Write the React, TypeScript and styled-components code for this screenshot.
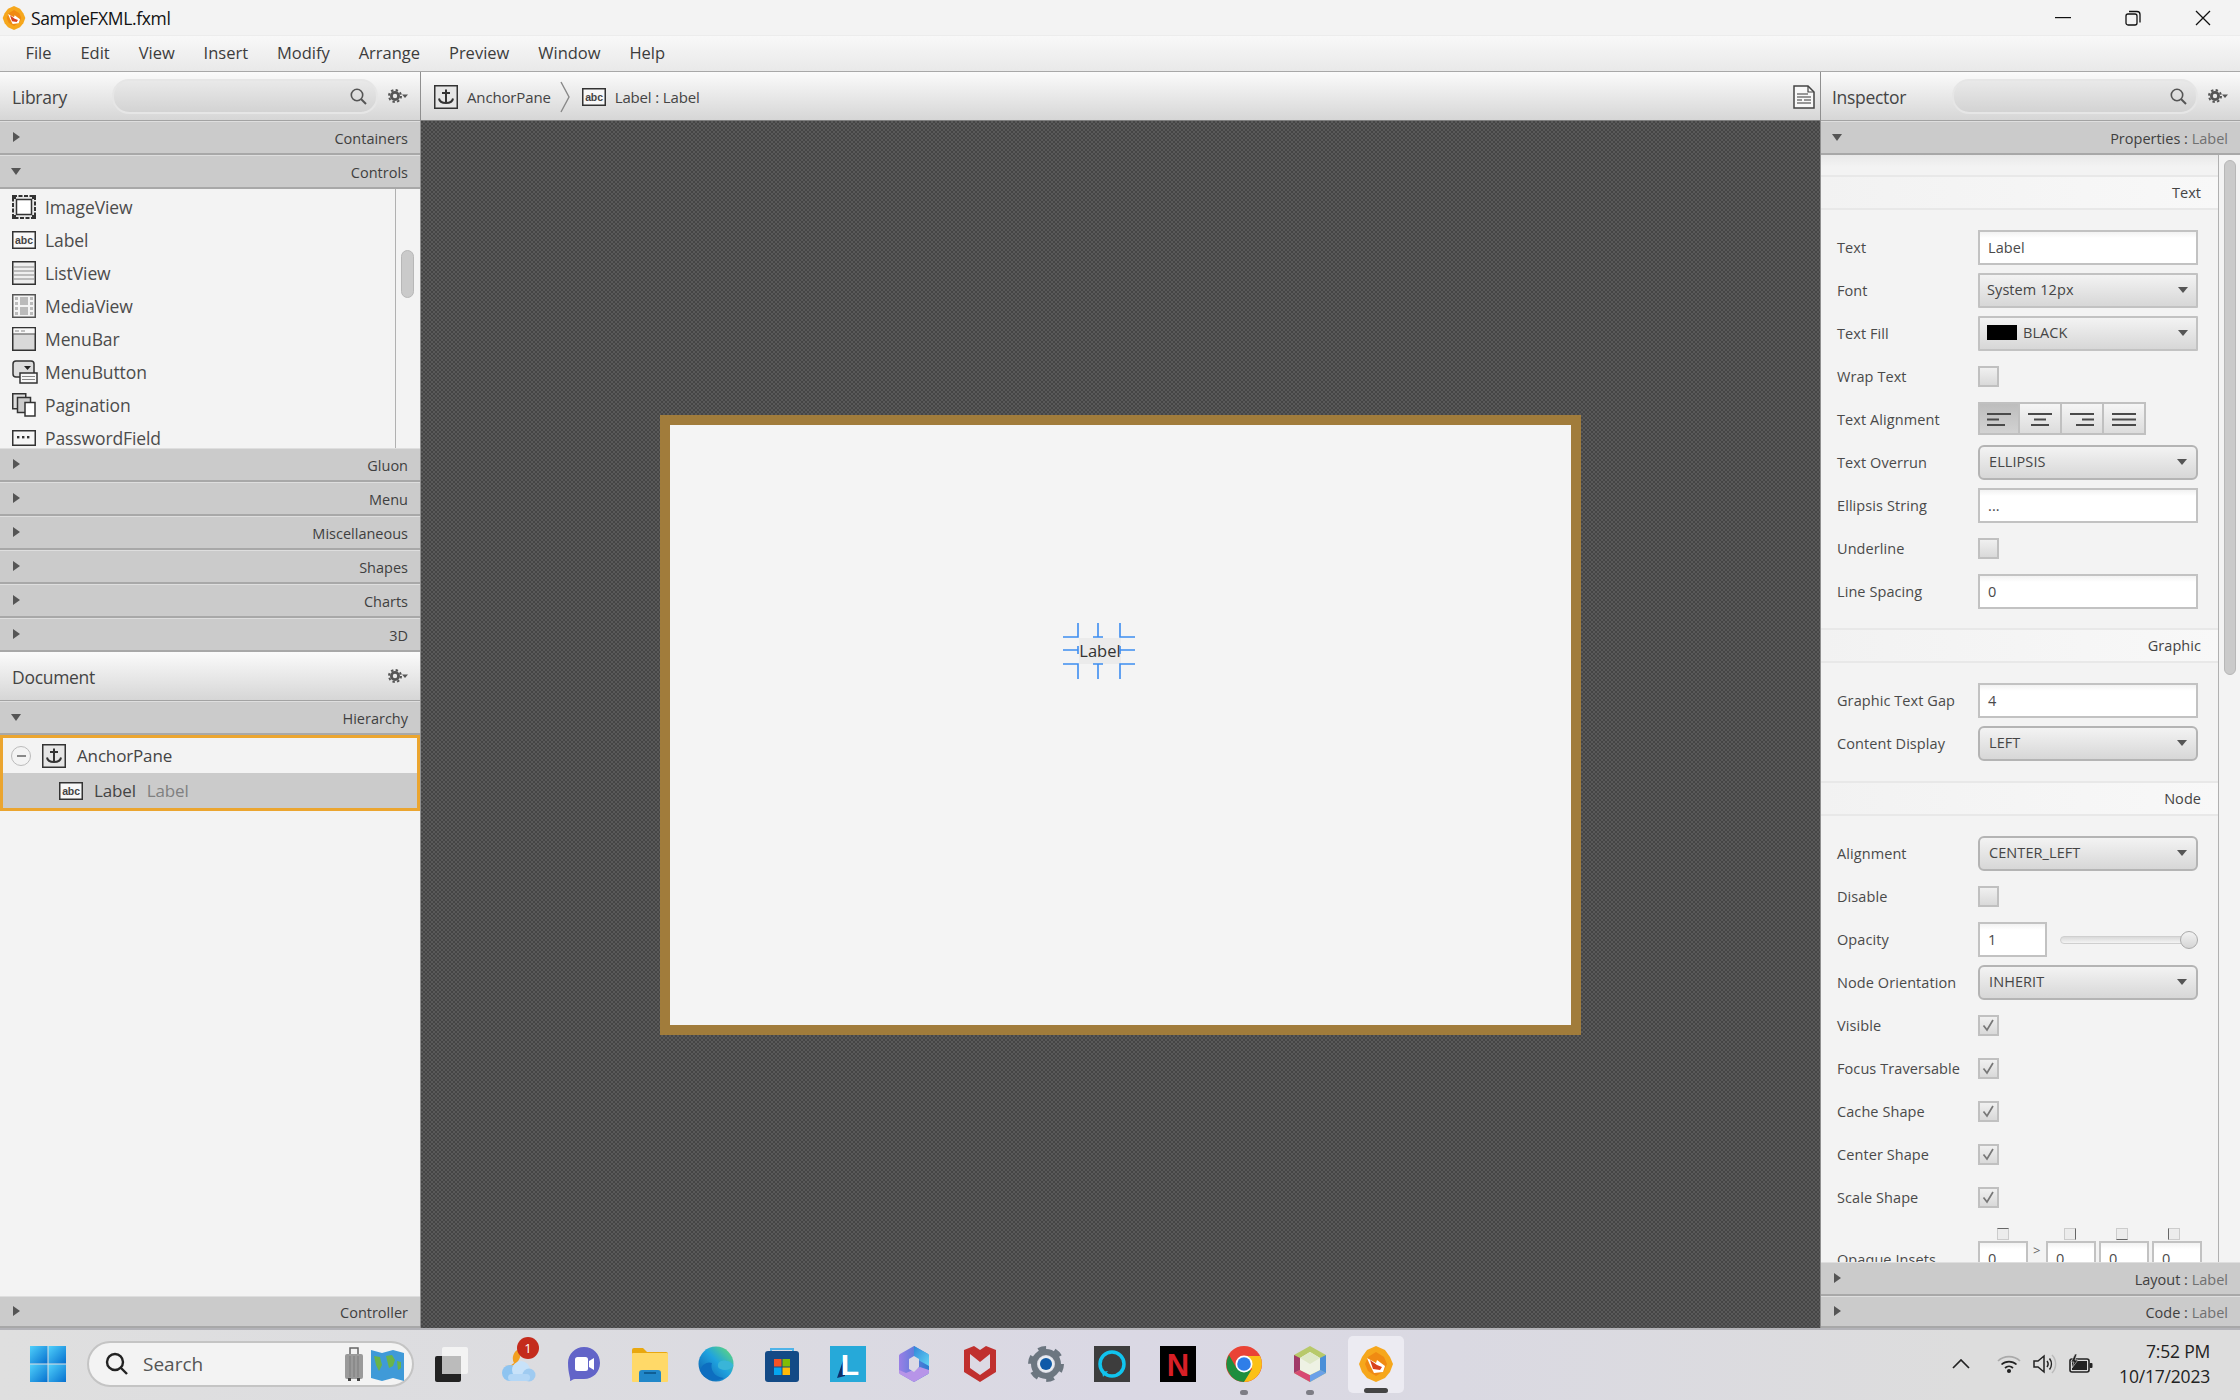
import React from "react";
import styled, { createGlobalStyle } from "styled-components";

const Global = createGlobalStyle`
  html, body { margin: 0; padding: 0; background: #f3f3f3; }
  body { font-family: "Open Sans", "Noto Sans", sans-serif; color: #3c3c3c; }
  * { box-sizing: border-box; }
`;

const Root = styled.div`width: 2240px; height: 1400px; display: flex; flex-direction: column; overflow: hidden;`;
const TitleBar = styled.div`height: 35px; flex: none; display: flex; align-items: center; background: #f3f3f3; padding-left: 2px;`;
const TitleText = styled.span`font-size: 17.5px; color: #111; margin-left: 5px; letter-spacing: -0.35px;`;
const WindowControls = styled.div`margin-left: auto; margin-right: 2px; display: flex; align-items: center;`;
const WindowButton = styled.div`width: 70px; height: 35px; display: flex; align-items: center; justify-content: center;`;
const MenuBar = styled.div`height: 37px; flex: none; display: flex; align-items: center; padding: 0 0 2px 11px; background: linear-gradient(#f8f8f8, #e9e9e9); border-top: 1px solid #ececec; border-bottom: 1px solid #a8a8a8;`;
const MenuItem = styled.span`font-size: 16.5px; padding: 0 14.45px; color: #3c3c3c; letter-spacing: 0;`;
const Main = styled.div`flex: 1; min-height: 0; display: flex;`;
const LeftPanel = styled.div`width: 421px; flex: none; display: flex; flex-direction: column; border-right: 1px solid #8f8f8f; background: #f3f3f3;`;
const CenterPanel = styled.div`flex: 1; min-width: 0; display: flex; flex-direction: column;`;
const RightPanel = styled.div`width: 420px; flex: none; display: flex; flex-direction: column; border-left: 1px solid #8f8f8f; background: #f3f3f3;`;
const PanelHeader = styled.div<{ $h?: number; $left?: number }>`height: ${p => p.$h ?? 49}px; flex: none; display: flex; align-items: center; padding: 2px 12px 0 ${p => p.$left ?? 12}px; background: linear-gradient(#fbfbfb, #d6d6d6); border-bottom: 1px solid #a3a3a3;`;
const PanelTitle = styled.span`font-size: 17.5px; color: #444; letter-spacing: -0.3px;`;
const SearchField = styled.div<{ $w: number }>`width: ${p => p.$w}px; height: 35px; margin-left: auto; margin-bottom: 2px; border-radius: 17px; border: 2px solid #e6e6e6; background: linear-gradient(#e9e9e9, #d3d3d3); display: flex; align-items: center; justify-content: flex-end; padding-right: 9px;`;
const GearWrap = styled.div`margin-left: 10px; margin-bottom: 2px; display: flex; align-items: center;`;
const GearRight = styled(GearWrap)`margin-left: auto;`;
const AccordionRow = styled.div<{ $h?: number }>`height: ${p => p.$h ?? 34}px; flex: none; display: flex; align-items: center; justify-content: space-between; padding: 2px 12px 0 12px; background: #cbcbcb; border-top: 1px solid #dedede; border-bottom: 2px solid #a8a8a8;`;
const Tri = styled.span<{ $open?: boolean }>`width: 0; height: 0; margin-bottom: 3px; ${p => p.$open
  ? `border-left: 5px solid transparent; border-right: 5px solid transparent; border-top: 7px solid #555; margin-left: -1px;`
  : `border-top: 5px solid transparent; border-bottom: 5px solid transparent; border-left: 7px solid #555; margin-left: 1px;`}`;
const RowTitle = styled.span`font-size: 14.5px; color: #3f3f3f; letter-spacing: 0;`;
const Muted = styled.span`color: #707070;`;
const LibraryBody = styled.div`height: 259px; flex: none; display: flex; overflow: hidden;`;
const LibraryList = styled.div`flex: 1; padding-top: 1px; border-right: 1px solid #b0b0b0; overflow: hidden;`;
const LibraryItem = styled.div`height: 33px; flex: none; display: flex; align-items: center; gap: 9px; padding-left: 12px; font-size: 17.5px; color: #4c4c4c; letter-spacing: -0.1px;`;
const Track = styled.div`width: 24px; flex: none; padding: 61px 6px 0 5px;`;
const Thumb = styled.div<{ $h: number }>`height: ${p => p.$h}px; border-radius: 7px; background: #cacaca; border: 1px solid #b7b7b7;`;
const Tree = styled.div`height: 76px; flex: none; border: 3px solid #eba52f; background: #f3f3f3; display: flex; flex-direction: column;`;
const TreeRow = styled.div<{ $sel?: boolean; $indent: number }>`flex: 1; display: flex; align-items: center; gap: 11px; padding-left: ${p => p.$indent}px; font-size: 17px; letter-spacing: -0.15px; color: #444; background: ${p => p.$sel ? "#cbcbcb" : "transparent"};`;
const Expander = styled.span`width: 20px; height: 20px; border-radius: 50%; border: 1.5px solid #bbb; display: flex; align-items: center; justify-content: center; &::before { content: ""; width: 9px; height: 2px; background: #888; }`;
const TreeMuted = styled.span`color: #808080; margin-left: 0;`;
const Spacer = styled.div`flex: 1; background: #f3f3f3;`;
const Toolbar = styled.div`height: 49px; flex: none; display: flex; align-items: center; padding: 2px 5px 0 13px; background: linear-gradient(#fbfbfb, #d6d6d6); border-bottom: 1px solid #7e7e7e; font-size: 15px; letter-spacing: -0.15px; color: #444;`;
const Crumb = styled.span`margin-left: 9px;`;
const CrumbSep = styled.span`margin: 0 12px 0 9px; display: flex;`;
const DocWrap = styled.span`margin-left: auto; display: flex;`;
const Canvas = styled.div`flex: 1; min-height: 0; display: flex; align-items: center; justify-content: center; background-color: #4e4e4e; background-image: repeating-conic-gradient(#595959 0 25%, #454545 0 50%); background-size: 4px 4px;`;
const Stage = styled.div`position: relative; width: 921px; height: 620px; border: 10px solid #a17c3b; background: #f4f4f4;`;
const SelectedLabel = styled.div`position: absolute; left: 409px; top: 213px; width: 42px; height: 26px; background: #ebebeb; font-size: 16.5px; line-height: 26px; text-align: center; color: #333; letter-spacing: 0;`;
const Handles = styled.svg`position: absolute; left: 393px; top: 198px;`;
const InspectorScroll = styled.div`flex: 1; min-height: 0; display: flex; overflow: hidden;`;
const InspectorBody = styled.div`width: 398px; flex: none; border-right: 1.5px solid #b0b0b0; padding-top: 20px; overflow: hidden; background: linear-gradient(#e9e9e9, #f3f3f3 12px);`;
const InspectorTrack = styled.div`flex: 1; padding: 5px 4px 0 5px;`;
const Band = styled.div<{ $mt?: number }>`height: 35px; margin-top: ${p => p.$mt ?? 0}px; display: flex; align-items: center; justify-content: flex-end; padding-right: 17px; font-size: 14.5px; letter-spacing: 0.05px; color: #444; background: linear-gradient(90deg, #f2f2f2, #f8f8f8); border-top: 2px solid #e8e8e8; border-bottom: 2px solid #e8e8e8;`;
const Rows = styled.div`padding: 16px 0 0 16px;`;
const Prop = styled.div`height: 43px; display: grid; grid-template-columns: 141px 220px; align-items: center; font-size: 14.5px; letter-spacing: 0.08px; color: #4a4a4a;`;
const Field = styled.div<{ $w?: number }>`width: ${p => p.$w ? `${p.$w}px` : "100%"}; height: 35px; border: 2px solid #c2c2c2; background: linear-gradient(#f2f2f2, #fff 6px); display: flex; align-items: center; padding-left: 8px; font-size: 14.5px; color: #4a4a4a; flex: none;`;
const Combo = styled.div<{ $round?: boolean }>`height: 35px; border: 2px solid ${p => p.$round ? "#b4b4b4" : "#c2c2c2"}; border-radius: ${p => p.$round ? 6 : 1}px; background: linear-gradient(#f3f3f3, #d7d7d7); display: flex; align-items: center; padding: 0 ${p => p.$round ? 9 : 8}px 2px ${p => p.$round ? 9 : 7}px; font-size: 14.5px; color: #454545;`;
const Caret = styled.span`margin-left: auto; width: 0; height: 0; border-left: 5px solid transparent; border-right: 5px solid transparent; border-top: 6px solid #555;`;
const Swatch = styled.span`width: 30px; height: 15px; background: #000; margin-right: 6px;`;
const Check = styled.div`width: 21px; height: 21px; margin-bottom: 1px; border: 2px solid #c0c0c0; background: linear-gradient(#f0f0f0, #d9d9d9); display: flex; align-items: center; justify-content: center;`;
const AlignGroup = styled.div`display: flex; margin-bottom: 2px;`;
const AlignBtn = styled.div<{ $on?: boolean }>`width: 42px; height: 33px; border: 2px solid #c0c0c0; border-left-width: ${p => p.$on ? 2 : 0}px; background: ${p => p.$on ? "linear-gradient(#bdbdbd, #d2d2d2)" : "linear-gradient(#f5f5f5, #dcdcdc)"}; display: flex; align-items: center; justify-content: center;`;
const OpacityBox = styled.div`display: flex; align-items: center;`;
const SliderTrack = styled.div`position: relative; width: 130px; height: 8px; margin-left: 13px; border-radius: 4px; border: 1px solid #cfcfcf; background: linear-gradient(#d9d9d9, #f4f4f4);`;
const SliderThumb = styled.div`position: absolute; right: -9px; top: -6px; width: 18px; height: 18px; border-radius: 50%; border: 1.5px solid #aaa; background: linear-gradient(#f2f2f2, #d5d5d5);`;
const InsetIcons = styled.div`display: grid; grid-template-columns: 67px 52px 52px 52px; margin: 9px 0 0 141px; padding-left: 19px;`;
const InsetIcon = styled.div<{ $side: string }>`width: 12px; height: 12px; border: 1px solid #ccc; background: #ececec; border-${p => p.$side}: 1.5px solid #666;`;
const InsetRow = styled.div`display: flex; align-items: flex-start; height: 30px; margin-top: 1px; font-size: 14.5px; letter-spacing: 0.08px; color: #4a4a4a;`;
const InsetLabel = styled.span`width: 141px; padding-top: 9px;`;
const InsetField = styled(Field)`height: 30px; margin-right: 3px; width: 50px; align-items: flex-start; padding-top: 6px;`;
const InsetSep = styled.span`width: 15px; color: #666; font-size: 13px; padding-left: 2px;`;

const Taskbar = styled.div`height: 72px; flex: none; padding-bottom: 2px; border-top: 2px solid #b3b3b8; display: flex; align-items: center; background: linear-gradient(90deg, #dfdfdf, #dcdce0 25%, #dad8e4 50%, #dad9e2 65%, #dddddd 88%);`;
const StartCell = styled.div`width: 66px; padding-left: 30px; flex: none; display: flex;`;
const SearchPill = styled.div`width: 327px; height: 46px; margin-left: 21px; margin-right: 5px; flex: none; border-radius: 23px; border: 2px solid #c4c4c4; background: #f3f3f3; display: flex; align-items: center; padding: 0 8px 0 16px; font-size: 19px; color: #555; gap: 14px;`;
const PillIcons = styled.div`margin-left: auto; display: flex; align-items: center; gap: 8px;`;
const Cell = styled.div<{ $active?: boolean }>`position: relative; width: ${p => p.$active ? 56 : 66}px; margin: ${p => p.$active ? "0 5px" : "0"}; height: 57px; flex: none; display: flex; align-items: center; justify-content: center; border-radius: 5px; background: ${p => p.$active ? "#ecebf2" : "transparent"};`;
const Badge = styled.span`position: absolute; left: 32px; top: 1px; width: 22px; height: 22px; border-radius: 50%; background: #c42b1c; color: #fff; font-size: 13px; display: flex; align-items: center; justify-content: center;`;
const Dot = styled.span`position: absolute; bottom: -2px; left: 29px; width: 8px; height: 5px; border-radius: 3px; background: #7d7d85;`;
const ActiveBar = styled.span`position: absolute; bottom: 0; left: 16px; width: 24px; height: 5px; border-radius: 3px; background: #444;`;
const Tray = styled.div`margin-left: auto; display: flex; align-items: center; padding-right: 30px;`;
const TrayIcons = styled.div`display: flex; align-items: center; gap: 12px; margin-right: 26px;`;
const TrayGap = styled.span`width: 27px;`;
const Clock = styled.div`text-align: right; font-size: 17.5px; line-height: 25px; color: #222; letter-spacing: -0.2px;`;

const AbcIcon = () => (
  <svg width="24" height="24" viewBox="0 0 24 24"><rect x="0.75" y="3.75" width="22.5" height="16.5" fill="#f8f8f8" stroke="#333" strokeWidth="1.5" /><text x="12" y="16" textAnchor="middle" fontSize="10.5" fontWeight="700" fontFamily="Liberation Sans, sans-serif" fill="#444">abc</text></svg>
);
const AnchorIcon = () => (
  <svg width="24" height="24" viewBox="0 0 24 24"><rect x="0.75" y="0.75" width="22.5" height="22.5" fill="#e6e6e6" stroke="#333" strokeWidth="1.5" /><g stroke="#333" strokeWidth="2" fill="none"><path d="M12 4.5V18M8 8h8" /><path d="M5 13.5c.5 3.2 3 4.5 7 4.5s6.5-1.3 7-4.5" /></g></svg>
);
const ImageIcon = () => (
  <svg width="24" height="24" viewBox="0 0 24 24"><rect x="1" y="1" width="22" height="22" fill="#e8e8e8" stroke="#333" strokeWidth="2" strokeDasharray="4 1.5" /><rect x="0" y="0" width="4" height="4" fill="#333" /><rect x="20" y="0" width="4" height="4" fill="#333" /><rect x="0" y="20" width="4" height="4" fill="#333" /><rect x="20" y="20" width="4" height="4" fill="#333" /><rect x="4.5" y="4.5" width="15" height="15" fill="#fff" stroke="#333" strokeWidth="1.5" /></svg>
);
const ListIcon = () => (
  <svg width="24" height="24" viewBox="0 0 24 24"><rect x="0.75" y="0.75" width="22.5" height="22.5" fill="#eee" stroke="#333" strokeWidth="1.5" /><path d="M2 6h20M2 10h20M2 14h20M2 18h20" stroke="#aaa" strokeWidth="1.5" /></svg>
);
const MediaIcon = () => (
  <svg width="24" height="24" viewBox="0 0 24 24"><rect x="0.75" y="0.75" width="22.5" height="22.5" fill="#f4f4f4" stroke="#555" strokeWidth="1.5" /><g fill="#bbb"><rect x="3" y="3" width="3" height="3" /><rect x="3" y="8" width="3" height="3" /><rect x="3" y="13" width="3" height="3" /><rect x="3" y="18" width="3" height="3" /><rect x="18" y="3" width="3" height="3" /><rect x="18" y="8" width="3" height="3" /><rect x="18" y="13" width="3" height="3" /><rect x="18" y="18" width="3" height="3" /><rect x="8" y="3" width="8" height="8" /><rect x="8" y="13" width="8" height="8" /></g></svg>
);
const MenuBarIcon = () => (
  <svg width="24" height="24" viewBox="0 0 24 24"><rect x="0.75" y="0.75" width="22.5" height="22.5" fill="#d9d9d9" stroke="#333" strokeWidth="1.5" /><rect x="1.5" y="1.5" width="21" height="5" fill="#f8f8f8" /><path d="M1 7h22" stroke="#555" /><path d="M3 4h4M9 4h4" stroke="#888" /></svg>
);
const MenuButtonIcon = () => (
  <svg width="24" height="24" viewBox="0 0 24 24" overflow="visible"><rect x="1" y="1" width="21" height="16" rx="3" fill="#ddd" stroke="#333" strokeWidth="1.5" /><path d="M12 6h7l-3.5 4z" fill="#222" /><rect x="8" y="13" width="17" height="10" fill="#f8f8f8" stroke="#333" strokeWidth="1.5" /><path d="M10 16.5h13M10 19.5h13" stroke="#888" /></svg>
);
const PaginationIcon = () => (
  <svg width="24" height="24" viewBox="0 0 24 24"><rect x="0.75" y="0.75" width="13" height="15" fill="#ddd" stroke="#333" strokeWidth="1.5" /><rect x="5.5" y="4.5" width="13" height="15" fill="#ccc" stroke="#333" strokeWidth="1.5" /><rect x="13" y="9.5" width="10" height="13.5" fill="#fff" stroke="#333" strokeWidth="1.5" /></svg>
);
const PasswordIcon = () => (
  <svg width="24" height="24" viewBox="0 0 24 24"><rect x="0.75" y="4.75" width="22.5" height="14.5" fill="#f6f6f6" stroke="#333" strokeWidth="1.5" /><g fill="#333"><rect x="5" y="10" width="2.4" height="2.4" /><rect x="10" y="10" width="2.4" height="2.4" /><rect x="15" y="10" width="2.4" height="2.4" /></g></svg>
);
const DocIcon = () => (
  <svg width="22" height="24" viewBox="0 0 22 24"><path d="M1 1h14l6 6v16H1z" fill="#f8f8f8" stroke="#444" strokeWidth="1.5" /><path d="M15 1v6h6" fill="none" stroke="#444" strokeWidth="1.2" /><path d="M4 9h11M4 12h14M4 15h5M11 15h7M4 18h14" stroke="#777" strokeWidth="1.3" /></svg>
);
const SearchIcon = () => (
  <svg width="17" height="17" viewBox="0 0 17 17" fill="none" stroke="#555" strokeWidth="1.6"><circle cx="7" cy="7" r="5.7" /><path d="M11 11l5 5" strokeWidth="2" /></svg>
);
const GearIcon = () => (
  <svg width="20" height="14" viewBox="0 0 20 14"><circle cx="7" cy="7" r="3.6" fill="none" stroke="#555" strokeWidth="2.8" /><circle cx="7" cy="7" r="6" fill="none" stroke="#555" strokeWidth="2" strokeDasharray="2.4 2.3" /><path d="M14 5.5h6l-3 3.5z" fill="#555" /></svg>
);
const CrumbChevron = () => (
  <svg width="10" height="32" viewBox="0 0 10 32" fill="none" stroke="#888" strokeWidth="1.4"><path d="M1 1l8 15-8 15" /></svg>
);
const CheckMark = () => (
  <svg width="13" height="13" viewBox="0 0 13 13" fill="none" stroke="#777" strokeWidth="1.7"><path d="M1.5 6.5l3.5 4.5 6-10" /></svg>
);
const AlignLines = ({ w }: { w: number[][] }) => (
  <svg width="24" height="14" viewBox="0 0 24 14">{w.map(([a, b], i) => <rect key={i} x={a} y={i * 5.5 + 1} width={b - a} height="2" fill="#4a4a4a" />)}</svg>
);

const WinLogo = () => (
  <svg width="36" height="36" viewBox="0 0 36 36">
    <defs><linearGradient id="win" x1="0" y1="0" x2="1" y2="1"><stop offset="0" stopColor="#4fd0fb" /><stop offset="1" stopColor="#0670cf" /></linearGradient></defs>
    <g fill="url(#win)"><rect x="0" y="0" width="17.5" height="17.5" /><rect x="18.5" y="0" width="17.5" height="17.5" /><rect x="0" y="18.5" width="17.5" height="17.5" /><rect x="18.5" y="18.5" width="17.5" height="17.5" /></g>
  </svg>
);
const TaskView = () => (
  <svg width="36" height="36" viewBox="0 0 36 36"><rect x="1" y="10" width="26" height="26" rx="2" fill="#222" /><rect x="8" y="1" width="26" height="27" rx="2" fill="#f5f5f5" fillOpacity=".9" /><rect x="8" y="10" width="19" height="18" fill="#bbb" /></svg>
);
const Weather = () => (
  <svg width="36" height="36" viewBox="0 0 36 36"><path d="M17 1a10 10 0 00-5 14 10 10 0 01-11 2 12 12 0 0016-16z" fill="#f29f1f" transform="translate(2 2)" /><circle cx="10" cy="27" r="8" fill="#8ec4f0" /><circle cx="21" cy="24" r="9" fill="#c8e2f9" /><circle cx="29" cy="29" r="6.5" fill="#9fcbf1" /><rect x="8" y="28" width="22" height="7" rx="3.5" fill="#b4d7f6" /></svg>
);
const Teams = () => (
  <svg width="36" height="36" viewBox="0 0 36 36"><path d="M18 1c9.5 0 16 7 16 16s-7 16-16 16H9c-2 0-4 2-5 2 1-3-2-7-2-18C2 8 9 1 18 1z" fill="#6264c8" /><rect x="9" y="11" width="13" height="14" rx="2.5" fill="#fff" /><path d="M23 15l5-3v12l-5-3z" fill="#fff" /></svg>
);
const Folder = () => (
  <svg width="36" height="36" viewBox="0 0 36 36"><path d="M0 4a2 2 0 012-2h9l4 4h19a2 2 0 012 2v26H0z" fill="#e9a80f" /><rect x="0" y="7" width="36" height="29" rx="1" fill="#ffd968" /><path d="M7 36v-9a3 3 0 013-3h16a3 3 0 013 3v9z" fill="#2187c9" /><rect x="12" y="26" width="12" height="2" fill="#0f5e94" /></svg>
);
const Edge = () => (
  <svg width="36" height="36" viewBox="0 0 36 36">
    <defs><linearGradient id="edge" x1="0" y1="1" x2="1" y2="0"><stop offset="0" stopColor="#0b57a8" /><stop offset=".55" stopColor="#1fa3df" /><stop offset="1" stopColor="#6be06a" /></linearGradient></defs>
    <circle cx="18" cy="18" r="17.5" fill="url(#edge)" /><path d="M35.5 20c-3 4-9 5-13 3-3-1-3-4-2-6 1-2 5-3 8-2 3 0 6 2 7 5z" fill="#39b5d8" /><path d="M14 17c-2 5 1 14 12 15-7 4-19 3-24-8 2-6 8-9 12-7z" fill="#0d6ec0" />
  </svg>
);
const Store = () => (
  <svg width="36" height="36" viewBox="0 0 36 36"><path d="M7 8V3h22v5" fill="none" stroke="#4fb3e8" strokeWidth="2" /><rect x="1" y="5" width="34" height="31" rx="3" fill="#134a86" /><rect x="10" y="13" width="7.5" height="7.5" fill="#f35325" /><rect x="18.5" y="13" width="7.5" height="7.5" fill="#81bc06" /><rect x="10" y="21.5" width="7.5" height="7.5" fill="#05a6f0" /><rect x="18.5" y="21.5" width="7.5" height="7.5" fill="#ffba08" /></svg>
);
const LLogo = () => (
  <svg width="36" height="36" viewBox="0 0 36 36"><rect width="36" height="36" fill="#26a9d9" /><path d="M7 32L15 9v21z" fill="#0d2f6b" /><text x="20" y="29" textAnchor="middle" fontSize="30" fontWeight="700" fontFamily="Liberation Sans, sans-serif" fill="#fff">L</text></svg>
);
const M365 = () => (
  <svg width="32" height="36" viewBox="0 0 32 36">
    <defs>
      <linearGradient id="m3a" x1="0" y1="0" x2="1" y2="0"><stop offset="0" stopColor="#9a7fe6" /><stop offset="1" stopColor="#2b7ad0" /></linearGradient>
      <linearGradient id="m3b" x1="0" y1="0" x2="1" y2="1"><stop offset="0" stopColor="#2f86d8" /><stop offset="1" stopColor="#63d4f4" /></linearGradient>
    </defs>
    <path d="M16 0l14 8a3 3 0 011 3v14a3 3 0 01-1 3l-14 8-14-8a3 3 0 01-1-3V11a3 3 0 011-3z" fill="url(#m3a)" />
    <path d="M16 0l14 8a3 3 0 011 3v9l-9-5-6-4z" fill="url(#m3b)" />
    <path d="M1 24l7 3 14-6 9 3v1a3 3 0 01-1 3l-14 8-14-8a3 3 0 01-1-3z" fill="#b794e8" />
    <path d="M11 13l5-3 5 3v8l-5 5-5-3z" fill="#dbd9e4" />
  </svg>
);
const McAfee = () => (
  <svg width="32" height="36" viewBox="0 0 32 36"><path d="M0 4l10-4 6 4 6-4 10 4v22L16 36 0 26z" fill="#c0302e" /><path d="M6 8l10 8 10-8v14l-10 7-10-7z" fill="#dcdae3" /></svg>
);
const SysGear = () => (
  <svg width="36" height="36" viewBox="0 0 36 36"><circle cx="18" cy="18" r="12" fill="none" stroke="#6c7680" strokeWidth="6" /><circle cx="18" cy="18" r="16" fill="none" stroke="#6c7680" strokeWidth="4" strokeDasharray="8 8.75" /><circle cx="18" cy="18" r="8" fill="#e9edf1" /><circle cx="18" cy="18" r="6" fill="#0f5aa8" /></svg>
);
const Alexa = () => (
  <svg width="36" height="36" viewBox="0 0 36 36"><rect width="36" height="36" fill="#3d3d3d" /><circle cx="18" cy="18" r="12" fill="none" stroke="#11c4ee" strokeWidth="3.5" /><path d="M9 31l5-6-6 1z" fill="#11c4ee" /></svg>
);
const Netflix = () => (
  <svg width="36" height="36" viewBox="0 0 36 36"><rect width="36" height="36" fill="#000" /><text x="18" y="30" textAnchor="middle" fontSize="31" fontWeight="700" fontFamily="Liberation Sans Narrow, Liberation Sans, sans-serif" fill="#d81f26">N</text></svg>
);
const Chrome = () => (
  <svg width="36" height="36" viewBox="0 0 36 36"><circle cx="18" cy="18" r="18" fill="#ea4335" /><path d="M18 18L3 27A18 18 0 0018 36l8-10z" fill="#1e8e3e" /><path d="M18 10h16a18 18 0 01-16 26l8-13z" fill="#fbc116" /><path d="M3 9a18 18 0 000 18l8-4z" fill="#1e8e3e" /><circle cx="18" cy="18" r="8.5" fill="#fff" /><circle cx="18" cy="18" r="6.8" fill="#2f7ee8" /></svg>
);
const Gem = () => (
  <svg width="32" height="36" viewBox="0 0 32 36"><path d="M16 0l16 9v18l-16 9-16-9V9z" fill="#b8c96a" /><path d="M0 9l6 3v12l-6 3z" fill="#a03a68" /><path d="M32 9l-6 3v12l6 3z" fill="#4a8fd8" /><path d="M0 27l6-3 10 5v7z" fill="#d84a72" /><path d="M32 27l-6-3-10 5v7z" fill="#6aa0e8" /><path d="M16 6l10 6v12l-10 5-10-5V12z" fill="#eef2e4" /><path d="M6 12l10-6 10 6-10 6z" fill="#dfe8c8" /></svg>
);
const Scene = ({ small }: { small?: boolean }) => {
  const s = small ? 24 : 36;
  return (
    <svg width={s} height={s} viewBox="0 0 36 36"><path d="M18 0l9 4 5 7 3 7-3 8-5 6-9 4-9-4-5-6-3-8 3-7 5-7z" fill="#f6a71c" /><path d="M18 6l8 5 3 7-3 7-8 5-8-5-3-7 3-7z" fill="#f08a12" /><path d="M9 12l9 5 1-3 8 6-2 6-9 1-4-8z" fill="#fff" /><path d="M12 14l7 5 5 2-2 3-7-1z" fill="#d8401e" /></svg>
  );
};
const Suitcase = () => (
  <svg width="18" height="34" viewBox="0 0 18 34"><path d="M5 7V1h8v6" fill="none" stroke="#666" strokeWidth="1.5" /><rect x="0" y="7" width="18" height="25" rx="2" fill="#9a9a9a" /><path d="M5 9v21M9 9v21M13 9v21" stroke="#7c7c7c" /><rect x="3" y="31" width="3" height="3" fill="#444" /><rect x="12" y="31" width="3" height="3" fill="#444" /></svg>
);
const MapIcon = () => (
  <svg width="33" height="34" viewBox="0 0 33 34"><path d="M0 3l11 3 11-3 11 3v28l-11-3-11 3-11-3z" fill="#3f9ad8" /><path d="M3 9l6 1 2 8-3 6-3-6zM15 9l6-1 3 5-2 6-4 2zM26 14l4 1v6l-3 2z" fill="#69b44a" /></svg>
);
const Wifi = () => (
  <svg width="24" height="20" viewBox="0 0 24 20" fill="none" stroke="#222" strokeWidth="1.7"><path d="M1 7a16 16 0 0122 0" stroke="#aaa" /><path d="M4.5 10.5a11 11 0 0115 0" /><path d="M8 14a6 6 0 018 0" /><circle cx="12" cy="17" r="1.2" fill="#222" /></svg>
);
const Volume = () => (
  <svg width="24" height="24" viewBox="0 0 24 24" fill="none" stroke="#222" strokeWidth="1.5"><path d="M1 9h4l6-5v16l-6-5H1z" /><path d="M14 9a5 5 0 010 6M16.5 6.5a9 9 0 010 11" /><path d="M19 3a13 13 0 010 18" stroke="#bbb" /></svg>
);
const Battery = () => (
  <svg width="24" height="20" viewBox="0 0 24 20"><rect x="1" y="5" width="19" height="13" rx="2" fill="none" stroke="#222" strokeWidth="1.6" /><rect x="3" y="7" width="15" height="9" fill="#222" /><rect x="20.5" y="9" width="3" height="5" rx="1" fill="#222" /><path d="M6 0L2 8h3l-2 6 6-8H6l2-6z" fill="#222" stroke="#ddd" strokeWidth=".6" /></svg>
);

const libraryItems: [React.FC, string][] = [
  [ImageIcon, "ImageView"], [AbcIcon, "Label"], [ListIcon, "ListView"], [MediaIcon, "MediaView"],
  [MenuBarIcon, "MenuBar"], [MenuButtonIcon, "MenuButton"], [PaginationIcon, "Pagination"], [PasswordIcon, "PasswordField"],
];
const menus = ["File", "Edit", "View", "Insert", "Modify", "Arrange", "Preview", "Window", "Help"];

const Section = ({ title, h }: { title: string; h?: number }) => (
  <AccordionRow $h={h}><Tri /><RowTitle>{title}</RowTitle></AccordionRow>
);
const PropText = ({ label, value }: { label: string; value: string }) => (
  <Prop><span>{label}</span><Field>{value}</Field></Prop>
);
const PropCombo = ({ label, value }: { label: string; value: string }) => (
  <Prop><span>{label}</span><Combo $round>{value}<Caret /></Combo></Prop>
);
const PropCheck = ({ label, on }: { label: string; on?: boolean }) => (
  <Prop><span>{label}</span><Check>{on && <CheckMark />}</Check></Prop>
);

export default function App() {
  return (
    <Root>
      <Global />
      <TitleBar>
        <Scene small />
        <TitleText>SampleFXML.fxml</TitleText>
        <WindowControls>
          <WindowButton><svg width="16" height="2"><rect width="16" height="1.2" fill="#111" /></svg></WindowButton>
          <WindowButton><svg width="16" height="16" viewBox="0 0 16 16" fill="none" stroke="#111" strokeWidth="1.3"><rect x="1" y="4" width="11" height="11" rx="2" /><path d="M4 1.5h8a3 3 0 013 3v8" /></svg></WindowButton>
          <WindowButton><svg width="16" height="16" viewBox="0 0 16 16" stroke="#111" strokeWidth="1.3"><path d="M1 1l14 14M15 1L1 15" /></svg></WindowButton>
        </WindowControls>
      </TitleBar>
      <MenuBar>{menus.map(m => <MenuItem key={m}>{m}</MenuItem>)}</MenuBar>
      <Main>
        <LeftPanel>
          <PanelHeader>
            <PanelTitle>Library</PanelTitle>
            <SearchField $w={266}><SearchIcon /></SearchField>
            <GearWrap><GearIcon /></GearWrap>
          </PanelHeader>
          <Section title="Containers" />
          <AccordionRow><Tri $open /><RowTitle>Controls</RowTitle></AccordionRow>
          <LibraryBody>
            <LibraryList>
              {libraryItems.map(([Icon, name]) => <LibraryItem key={name}><Icon />{name}</LibraryItem>)}
            </LibraryList>
            <Track><Thumb $h={48} /></Track>
          </LibraryBody>
          {["Gluon", "Menu", "Miscellaneous", "Shapes", "Charts", "3D"].map(t => <Section key={t} title={t} />)}
          <PanelHeader>
            <PanelTitle>Document</PanelTitle>
            <GearRight><GearIcon /></GearRight>
          </PanelHeader>
          <AccordionRow><Tri $open /><RowTitle>Hierarchy</RowTitle></AccordionRow>
          <Tree>
            <TreeRow $indent={8}><Expander /><AnchorIcon />AnchorPane</TreeRow>
            <TreeRow $sel $indent={56}><AbcIcon /><span>Label</span><TreeMuted>Label</TreeMuted></TreeRow>
          </Tree>
          <Spacer />
          <Section title="Controller" h={32} />
        </LeftPanel>
        <CenterPanel>
          <Toolbar>
            <AnchorIcon /><Crumb>AnchorPane</Crumb>
            <CrumbSep><CrumbChevron /></CrumbSep>
            <AbcIcon /><Crumb>Label : Label</Crumb>
            <DocWrap><DocIcon /></DocWrap>
          </Toolbar>
          <Canvas>
            <Stage>
              <SelectedLabel>Label</SelectedLabel>
              <Handles width="72" height="56" viewBox="0 0 72 56" fill="none" stroke="#3d8df0" strokeWidth="1.6">
                <path d="M0 14h15V0M35 0v14M30 14h10M57 0v14h15M0 27h15M15 23v8M57 23v8M57 27h15M0 41h15v15M30 41h10M35 41v15M72 41H57v15" />
              </Handles>
            </Stage>
          </Canvas>
        </CenterPanel>
        <RightPanel>
          <PanelHeader $left={11}>
            <PanelTitle>Inspector</PanelTitle>
            <SearchField $w={246}><SearchIcon /></SearchField>
            <GearWrap><GearIcon /></GearWrap>
          </PanelHeader>
          <AccordionRow><Tri $open /><RowTitle>Properties : <Muted>Label</Muted></RowTitle></AccordionRow>
          <InspectorScroll>
            <InspectorBody>
              <Band>Text</Band>
              <Rows>
                <PropText label="Text" value="Label" />
                <Prop><span>Font</span><Combo>System 12px<Caret /></Combo></Prop>
                <Prop><span>Text Fill</span><Combo><Swatch />BLACK<Caret /></Combo></Prop>
                <PropCheck label="Wrap Text" />
                <Prop><span>Text Alignment</span>
                  <AlignGroup>
                    <AlignBtn $on><AlignLines w={[[0, 24], [0, 12], [0, 18]]} /></AlignBtn>
                    <AlignBtn><AlignLines w={[[0, 24], [6, 18], [3, 21]]} /></AlignBtn>
                    <AlignBtn><AlignLines w={[[0, 24], [12, 24], [6, 24]]} /></AlignBtn>
                    <AlignBtn><AlignLines w={[[0, 24], [0, 24], [0, 24]]} /></AlignBtn>
                  </AlignGroup>
                </Prop>
                <PropCombo label="Text Overrun" value="ELLIPSIS" />
                <PropText label="Ellipsis String" value="..." />
                <PropCheck label="Underline" />
                <PropText label="Line Spacing" value="0" />
              </Rows>
              <Band $mt={15}>Graphic</Band>
              <Rows>
                <PropText label="Graphic Text Gap" value="4" />
                <PropCombo label="Content Display" value="LEFT" />
              </Rows>
              <Band $mt={16}>Node</Band>
              <Rows>
                <PropCombo label="Alignment" value="CENTER_LEFT" />
                <PropCheck label="Disable" />
                <Prop><span>Opacity</span>
                  <OpacityBox><Field $w={69}>1</Field><SliderTrack><SliderThumb /></SliderTrack></OpacityBox>
                </Prop>
                <PropCombo label="Node Orientation" value="INHERIT" />
                <PropCheck label="Visible" on />
                <PropCheck label="Focus Traversable" on />
                <PropCheck label="Cache Shape" on />
                <PropCheck label="Center Shape" on />
                <PropCheck label="Scale Shape" on />
                <InsetIcons>
                  <InsetIcon $side="top" /><InsetIcon $side="right" /><InsetIcon $side="bottom" /><InsetIcon $side="left" />
                </InsetIcons>
                <InsetRow>
                  <InsetLabel>Opaque Insets</InsetLabel>
                  <InsetField>0</InsetField><InsetSep>&gt;</InsetSep><InsetField>0</InsetField><InsetField>0</InsetField><InsetField>0</InsetField>
                </InsetRow>
              </Rows>
            </InspectorBody>
            <InspectorTrack><Thumb $h={515} /></InspectorTrack>
          </InspectorScroll>
          <AccordionRow><Tri /><RowTitle>Layout : <Muted>Label</Muted></RowTitle></AccordionRow>
          <AccordionRow $h={32}><Tri /><RowTitle>Code : <Muted>Label</Muted></RowTitle></AccordionRow>
        </RightPanel>
      </Main>
      <Taskbar>
        <StartCell><WinLogo /></StartCell>
        <SearchPill>
          <svg width="24" height="24" viewBox="0 0 24 24" fill="none" stroke="#222" strokeWidth="2.4"><circle cx="10" cy="10" r="8" /><path d="M16 16l6 6" /></svg>
          Search
          <PillIcons><Suitcase /><MapIcon /></PillIcons>
        </SearchPill>
        <Cell><TaskView /></Cell>
        <Cell><Weather /><Badge>1</Badge></Cell>
        <Cell><Teams /></Cell>
        <Cell><Folder /></Cell>
        <Cell><Edge /></Cell>
        <Cell><Store /></Cell>
        <Cell><LLogo /></Cell>
        <Cell><M365 /></Cell>
        <Cell><McAfee /></Cell>
        <Cell><SysGear /></Cell>
        <Cell><Alexa /></Cell>
        <Cell><Netflix /></Cell>
        <Cell><Chrome /><Dot /></Cell>
        <Cell><Gem /><Dot /></Cell>
        <Cell $active><Scene /><ActiveBar /></Cell>
        <Tray>
          <svg width="18" height="10" viewBox="0 0 18 10" fill="none" stroke="#222" strokeWidth="1.7"><path d="M1 9l8-8 8 8" /></svg>
          <TrayGap />
          <TrayIcons><Wifi /><Volume /><Battery /></TrayIcons>
          <Clock>7:52 PM<br />10/17/2023</Clock>
        </Tray>
      </Taskbar>
    </Root>
  );
}
